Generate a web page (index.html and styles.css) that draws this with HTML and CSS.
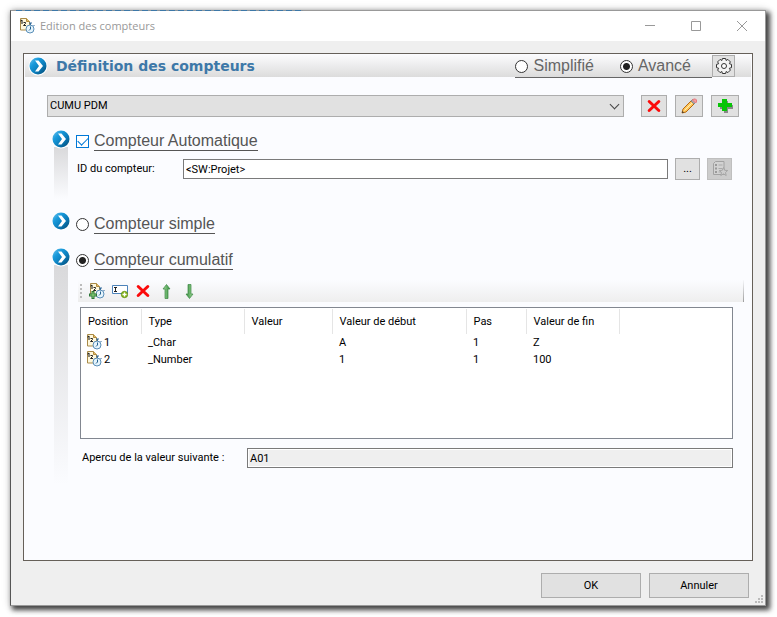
FILE: index.html
```html
<!DOCTYPE html>
<html lang="fr">
<head>
<meta charset="utf-8">
<title>Edition des compteurs</title>
<link rel="stylesheet" href="styles.css">
</head>
<body>
<svg class="defs" aria-hidden="true">
  <defs>
    <linearGradient id="ball" x1="0" y1="0" x2="1" y2="1"><stop offset="0" stop-color="#7cc8ee"/><stop offset=".3" stop-color="#1a9bdc"/><stop offset=".6" stop-color="#0b7dbb"/><stop offset="1" stop-color="#05466f"/></linearGradient>
    <linearGradient id="leaf" x1="0" x2="1"><stop offset="0" stop-color="#a5dc9c"/><stop offset="1" stop-color="#2f8a3a"/></linearGradient>
    <symbol id="chevron" viewBox="0 0 20 20">
      <circle cx="10" cy="10" r="9.5" fill="#fff"/>
      <circle cx="10" cy="10" r="8.500" fill="url(#ball)"/>
      <path d="M7 4.500h3.500l4.500 5.500-4.500 5.500H7l4-5.500z" fill="#fff"/>
    </symbol>
    <symbol id="counter" viewBox="0 0 16 16">
      <path d="M1.500 .5h6l3 3v8.500h-9z" fill="#fff8dc" stroke="#a88a48"/>
      <path d="M7.500 .5v3h3" fill="#e2bd68" stroke="#b28a3c"/>
      <path d="M1.500 3l1.500-1v4" fill="none" stroke="#111"/>
      <path d="M4.500 4.500h2v1l-2 2h2.500" fill="none" stroke="#222"/>
      <path d="M10 5h3M11.500 5v2M14.500 7l1 1" stroke="#31699a"/>
      <circle cx="11" cy="11" r="4" fill="#e5f4fc" stroke="#5b8fb8"/>
      <path d="M11.500 8.500V11l-1.500 1.500" fill="none" stroke="#24618f"/>
    </symbol>
    <symbol id="cross" viewBox="0 0 14 14"><path d="M2.200 2.500l9.600 9M11.800 2.500l-9.600 9" stroke="#fb0a0a" stroke-width="3" stroke-linecap="round"/></symbol>
    <symbol id="arrow" viewBox="0 0 9 15"><path d="M4.500 .5l3.500 4.500H6v9.500H3V5H1z" fill="url(#leaf)" stroke="#3b8743" stroke-width=".7"/></symbol>
  </defs>
</svg>
<main class="window">
  <header class="titlebar">
    <svg class="icon16"><use href="#counter"/></svg>
    <h1>Edition des compteurs</h1>
    <button class="caption" aria-label="Réduire"><svg viewBox="0 0 12 12"><path d="M1 5.500h10"/></svg></button>
    <button class="caption" aria-label="Agrandir"><svg viewBox="0 0 12 12"><path d="M1.500 1.500h9v9h-9z"/></svg></button>
    <button class="caption" aria-label="Fermer"><svg viewBox="0 0 12 12"><path d="M1 1l10 10M11 1L1 11"/></svg></button>
  </header>

  <section class="panel">
    <div class="banner">
      <svg class="ball"><use href="#chevron"/></svg>
      <h2>Définition des compteurs</h2>
      <div class="modes">
        <label><input type="radio" name="mode"> Simplifié</label>
        <label><input type="radio" name="mode" checked> Avancé</label>
      </div>
      <button class="tool gear" aria-label="Options">
        <svg viewBox="0 0 18 18"><path d="M7.400 1.500h3.200l.5 2 1.800-1.100 2.500 2.500-1.100 1.800 2.200.7v3.200l-2.200.7 1.100 1.800-2.500 2.500-1.800-1.100-.5 2H7.400l-.5-2-1.800 1.100-2.500-2.500 1.100-1.800-2.200-.7V7.400l2.200-.7-1.100-1.800 2.500-2.500 1.800 1.100z" fill="#f4f4f4" stroke="#333" stroke-linejoin="round"/><circle cx="9" cy="9" r="2.500" fill="#fff" stroke="#333"/></svg>
      </button>
    </div>

    <div class="chooser">
      <select aria-label="Compteur"><option>CUMU PDM</option></select>
      <button class="tool" aria-label="Supprimer"><svg class="icon14"><use href="#cross"/></svg></button>
      <button class="tool wide" aria-label="Modifier">
        <svg class="icon16" viewBox="0 0 16 16"><path d="M1 15l1-4 8-8 3 3-8 8z" fill="#ffc860" stroke="#b8690c"/><path d="M3.500 12.500l8-8" stroke="#fff0ae"/><path d="M10 3l2-2 3 3-2 2z" fill="#aaa" stroke="#888"/><path d="M11.500 2l1-1h2l1 1v2l-1 1z" fill="#f39ca0" stroke="#e8797f"/><path d="M1 15l.5-2 1.500 1.500z" fill="#333"/></svg>
      </button>
      <button class="tool wide" aria-label="Ajouter">
        <svg class="icon16" viewBox="0 0 16 16"><path d="M7 3h4v4h5v4h-5v4H7v-4H3V7h4z" fill="#888"/><path d="M5 1h5v4h5v4h-5v4H5V9H1V5h4z" fill="#08c408"/></svg>
      </button>
    </div>

    <section class="step step-auto">
      <svg class="ball"><use href="#chevron"/></svg>
      <div class="body">
        <label class="choice"><input type="checkbox" checked><span>Compteur Automatique</span></label>
        <div class="field">
          <label for="ident">ID du compteur:</label>
          <input id="ident" type="text" value="&lt;SW:Projet&gt;">
          <button class="tool">...</button>
          <button class="tool" disabled aria-label="Favoris">
            <svg class="icon16" viewBox="0 0 16 16"><path d="M1.500 2.500l2-2h8.500v13H1.500z" fill="#d2d2d2" stroke="#a2a2a2"/><path d="M3 4h2M3 7.500h2M3 11h2" stroke="#9a9a9a" stroke-width="2"/><path d="M6.500 4h4M6.500 7.500h4M6.500 11h3" stroke="#aaa"/><path d="M11.500 6.500l1.200 2.800 3 .2-2.200 2 .7 3-2.700-1.600L8.800 14.500l.7-3-2.200-2 3-.2z" fill="#ccc" stroke="#a5a5a5"/></svg>
          </button>
        </div>
      </div>
    </section>

    <section class="step step-simple">
      <svg class="ball"><use href="#chevron"/></svg>
      <div class="body">
        <label class="choice"><input type="radio" name="kind"><span>Compteur simple</span></label>
      </div>
    </section>

    <section class="step step-cumul">
      <svg class="ball"><use href="#chevron"/></svg>
      <div class="body">
        <label class="choice"><input type="radio" name="kind" checked><span>Compteur cumulatif</span></label>
        <div class="toolbar">
          <i class="grip"></i>
          <button aria-label="Ajouter un compteur"><svg class="icon16" viewBox="0 0 16 16"><use href="#counter"/><path d="M4 8v8M0 12h8" stroke="#2b7537" stroke-width="3"/><path d="M4 9v6M1 12h6" stroke="#8ed67c"/></svg></button>
          <button aria-label="Ajouter un texte"><svg class="icon16" viewBox="0 0 16 16"><path d="M.5 2.500h15v8H.5z" fill="#fff" stroke="#4d83ba"/><path d="M2 4.500h3M3.500 4.500v4M2 8.500h3" stroke="#222"/><circle cx="12.500" cy="11.500" r="3.200" fill="#87b51f" stroke="#5b8b0c" stroke-width=".7"/><path d="M12.500 9.500v4M10.500 11.500h4" stroke="#fff" stroke-width="1.300"/></svg></button>
          <button aria-label="Supprimer la ligne"><svg class="icon14"><use href="#cross"/></svg></button>
          <button aria-label="Monter"><svg class="arrow"><use href="#arrow"/></svg></button>
          <button aria-label="Descendre"><svg class="arrow down"><use href="#arrow"/></svg></button>
        </div>
        <div class="list">
          <table>
            <colgroup><col class="c1"><col class="c2"><col class="c3"><col class="c4"><col class="c5"><col class="c6"><col></colgroup>
            <thead><tr><th>Position</th><th>Type</th><th>Valeur</th><th>Valeur de début</th><th>Pas</th><th>Valeur de fin</th><th></th></tr></thead>
            <tbody>
              <tr><td><svg class="icon16"><use href="#counter"/></svg>1</td><td>_Char</td><td></td><td>A</td><td>1</td><td>Z</td><td></td></tr>
              <tr><td><svg class="icon16"><use href="#counter"/></svg>2</td><td>_Number</td><td></td><td>1</td><td>1</td><td>100</td><td></td></tr>
            </tbody>
          </table>
        </div>
        <div class="field preview">
          <label for="next">Apercu de la valeur suivante :</label>
          <input id="next" type="text" value="A01" readonly>
        </div>
      </div>
    </section>
  </section>

  <footer>
    <button class="action">OK</button>
    <button class="action">Annuler</button>
    <svg class="resize" viewBox="0 0 8 8" aria-hidden="true"><path d="M6 0h2v2H6zM3 3h2v2H3zM6 3h2v2H6zM0 6h2v2H0zM3 6h2v2H3zM6 6h2v2H6z" fill="#bbb"/></svg>
  </footer>
</main>
</body>
</html>
```
FILE: styles.css
```css
* { box-sizing: border-box; }

body {
  margin: 0;
  padding: 10px 11px 11px 10px;
  background: #fff;
  color: #000;
  font: 11px/16px Roboto, "Liberation Sans", sans-serif;
}

h1, h2 { margin: 0; }
button, input, select { margin: 0; padding: 0; font: inherit; color: inherit; border-radius: 0; }
svg { display: block; flex: none; }
.defs { position: absolute; width: 0; height: 0; }
.icon16 { width: 16px; height: 16px; }
.icon14 { width: 14px; height: 14px; }
.ball { width: 20px; height: 20px; }

.window {
  position: relative;
  display: flex;
  flex-direction: column;
  min-height: calc(100vh - 21px);
  background: #efefef;
  border: 1px solid #999;
  border-left-color: #555;
  box-shadow: 3px 3px 5px 1px #444, 0 0 8px #ccc;
}
/* sliver of the window behind, showing along the top edge */
.window::before {
  content: "";
  position: absolute;
  top: -1px;
  left: 5px;
  width: 38%;
  height: 1px;
  background: repeating-linear-gradient(90deg, #3d78a8 0 6px, #8a949c 6px 9px);
}

.titlebar {
  display: flex;
  align-items: center;
  height: 30px;
  padding-left: 8px;
  background: #fff;
}
.titlebar h1 {
  flex: 1;
  margin-left: 5px;
  color: #999;
  font: 11px/16px "Open Sans", sans-serif;
}
.caption {
  display: grid;
  place-items: center;
  width: 46px;
  height: 28px;
  border: 0;
  background: none;
}
.caption svg { width: 12px; height: 12px; fill: none; stroke: #999; }

.panel {
  flex: 1;
  margin: 12px 12px 0;
  padding-top: 1px;
  background: #fbfcff;
  border: 1px solid #666059;
}

.banner {
  display: flex;
  align-items: center;
  height: 22px;
  margin: 0 1px;
  padding: 0 16px 0 3px;
  background: linear-gradient(#fbfbfd, #dcdcdc);
}
.banner h2 {
  flex: 1;
  margin-left: 8px;
  color: #3d78a8;
  font: bold 14px/20px "DejaVu Sans", sans-serif;
}
.modes {
  display: flex;
  gap: 26px;
  align-self: flex-start;
  padding-right: 21px;
  border-bottom: 1px solid #666;
  color: #666;
  font: 16px/22px "Liberation Sans", sans-serif;
}
.modes label { display: flex; align-items: center; gap: 5px; }

input[type="radio"] {
  appearance: none;
  width: 13px;
  height: 13px;
  border: 1px solid #333;
  border-radius: 50%;
  background: #fff;
}
input[type="radio"]:checked { background: radial-gradient(circle, #222 0 3px, #fff 4px); }
input[type="checkbox"] {
  appearance: none;
  width: 13px;
  height: 13px;
  border: 1px solid #0078d7;
  background: #fff;
  display: grid;
  place-items: center;
}
input[type="checkbox"]:checked::before {
  content: "";
  width: 9px;
  height: 5px;
  margin-bottom: 2px;
  border: solid #0078d7;
  border-width: 0 0 1px 1px;
  transform: rotate(-45deg);
}

.tool {
  display: grid;
  place-items: center;
  flex: none;
  width: 26px;
  height: 22px;
  border: 1px solid #adadad;
  background: #e1e1e1;
}
.tool.wide { width: 28px; }
.tool:disabled { background: #ccc; border-color: #bfbfbf; }
.tool.gear { width: 23px; }
.gear svg { width: 18px; height: 18px; }

.chooser {
  position: relative;
  display: flex;
  gap: 8px;
  margin: 18px 13px 0 23px;
}
.chooser select {
  flex: 1;
  height: 22px;
  margin-right: 9px;
  padding-left: 2px;
  border: 1px solid #adadad;
  appearance: none;
  background: #e1e1e1;
}
.chooser::after {
  content: "";
  position: absolute;
  right: 121px;
  top: 6px;
  width: 6px;
  height: 6px;
  border: solid #444;
  border-width: 0 1px 1px 0;
  transform: rotate(45deg);
  pointer-events: none;
}

.step {
  display: grid;
  grid-template-columns: 20px minmax(0, 1fr);
  column-gap: 5px;
  align-items: start;
  padding-left: 27px;
  background: linear-gradient(#d9d9db, #fbfcff) 30px 18px / 14px calc(100% - 30px) no-repeat;
}
.step-auto { min-height: 82px; margin-top: 12px; }
.step-simple { min-height: 36px; background-size: 14px 0; }
.step-cumul { min-height: 238px; background-size: 14px calc(100% - 18px); }
.choice {
  display: flex;
  align-items: center;
  gap: 5px;
  width: max-content;
  height: 24px;
  color: #555;
  font: 16px/18px "Liberation Sans", sans-serif;
}
.choice span { border-bottom: 1px solid #555; }
.step-simple .choice, .step-cumul .choice { height: 26px; }

.field {
  display: flex;
  align-items: center;
  gap: 7px;
  margin: 5px 20px 0 1px;
}
.field label { width: 99px; }
.field input {
  flex: 1;
  min-width: 0;
  height: 20px;
  padding-left: 2px;
  border: 1px solid #7a7a7a;
  background: #fff;
}
.field .tool { width: 25px; line-height: 10px; }

.toolbar {
  display: flex;
  align-items: center;
  gap: 7px;
  height: 22px;
  margin: 7px 8px 0 2px;
  padding-left: 2px;
  background: linear-gradient(#fbfcff, #eee);
  border-right: 1px solid;
  border-image: linear-gradient(#fbfcff, #999) 1;
}
.toolbar button { border: 0; background: none; min-width: 16px; display: grid; place-items: center; }
.grip {
  width: 2px;
  height: 14px;
  background: repeating-linear-gradient(#bbb 0 2px, transparent 2px 4px);
}
.arrow { width: 9px; height: 15px; }
.down { transform: rotate(180deg); }

.list {
  height: 132px;
  margin: 5px 19px 0 4px;
  padding-top: 1px;
  background: #fff;
  border: 1px solid #828790;
}
table { width: 100%; border-collapse: collapse; table-layout: fixed; }
th, td { padding: 0 0 0 7px; text-align: left; font-weight: normal; white-space: nowrap; }
th { height: 25px; border-right: 1px solid #e5e5e5; }
th:last-child { border: 0; }
td { height: 17px; line-height: 17px; }
td:first-child { display: flex; gap: 2px; padding-left: 5px; }
.c1 { width: 60px; }
.c2 { width: 103px; }
.c3 { width: 88px; }
.c4 { width: 134px; }
.c5 { width: 60px; }
.c6 { width: 93px; }

.preview { margin: 9px 19px 0 6px; }
.preview label { width: 158px; }
.preview input { background: #efefef; box-shadow: inset 0 0 0 1px #fff; }

footer {
  position: relative;
  display: flex;
  justify-content: flex-end;
  gap: 8px;
  padding: 12px 16px 7px;
}
.action {
  width: 100px;
  height: 25px;
  border: 1px solid #adadad;
  background: #e1e1e1;
}
.resize { position: absolute; right: 2px; bottom: 2px; width: 8px; height: 8px; }
```
